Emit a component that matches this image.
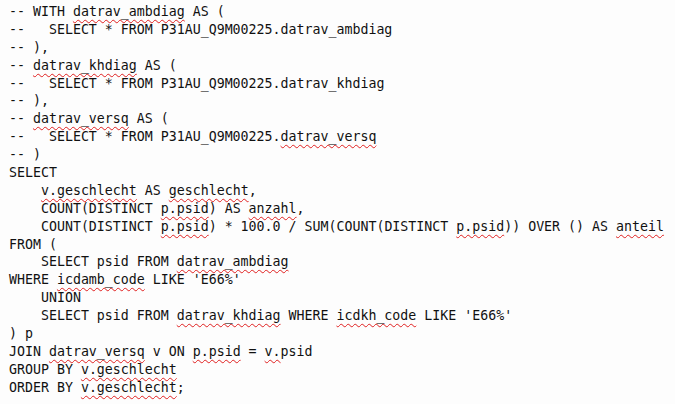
const lines: (string | [string])[][] = [
  ["-- WITH ", ["datrav_ambdiag"], " AS ("],
  ["--   SELECT * FROM P31AU_Q9M00225.datrav_ambdiag"],
  ["-- ),"],
  ["-- ", ["datrav_khdiag"], " AS ("],
  ["--   SELECT * FROM P31AU_Q9M00225.datrav_khdiag"],
  ["-- ),"],
  ["-- ", ["datrav_versq"], " AS ("],
  ["--   SELECT * FROM P31AU_Q9M00225.", ["datrav_versq"]],
  ["-- )"],
  ["SELECT"],
  ["    ", ["v.geschlecht"], " AS ", ["geschlecht"], ","],
  ["    COUNT(DISTINCT ", ["p.psid"], ") AS ", ["anzahl"], ","],
  ["    COUNT(DISTINCT ", ["p.psid"], ") * 100.0 / SUM(COUNT(DISTINCT ", ["p.psid"], ")) OVER () AS ", ["anteil"]],
  ["FROM ("],
  ["    SELECT psid FROM ", ["datrav_ambdiag"]],
  ["WHERE ", ["icdamb_code"], " LIKE 'E66%'"],
  ["    UNION"],
  ["    SELECT psid FROM ", ["datrav_khdiag"], " WHERE ", ["icdkh_code"], " LIKE 'E66%'"],
  [") p"],
  ["JOIN ", ["datrav_versq"], " v ON ", ["p.psid"], " = ", ["v."], "psid"],
  ["GROUP BY ", ["v.geschlecht"]],
  ["ORDER BY ", ["v.geschlecht"], ";"],
];

export default function App() {
  return (
    <div className="w-[675px] h-[404px] bg-[#fdfdfd] overflow-hidden pl-[9px] pt-[3px]">
      <pre className="font-['DejaVu_Sans_Mono',monospace] text-[13.28px] leading-[17.9px] text-[#111]">
        {lines.map((parts, i) => (
          <div key={i} className="h-[17.9px] whitespace-pre">
            {parts.map((p, j) =>
              typeof p === "string" ? (
                <span key={j}>{p}</span>
              ) : (
                <span
                  key={j}
                  className="underline decoration-wavy decoration-[#e02020] decoration-1 underline-offset-[3px]"
                >
                  {p[0]}
                </span>
              )
            )}
          </div>
        ))}
      </pre>
    </div>
  );
}
